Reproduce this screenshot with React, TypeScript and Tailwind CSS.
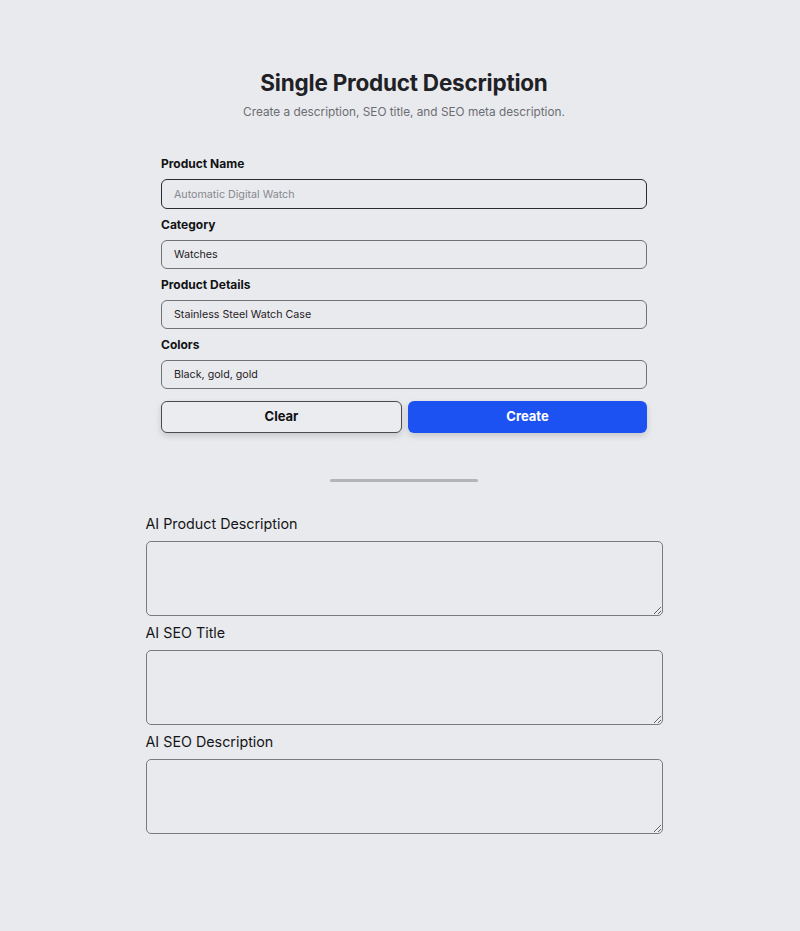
import { useState } from "react";

const fields = [
  { label: "Product Name", value: "", placeholder: "Automatic Digital Watch" },
  { label: "Category", value: "Watches", placeholder: "" },
  { label: "Product Details", value: "Stainless Steel Watch Case", placeholder: "" },
  { label: "Colors", value: "Black, gold, gold", placeholder: "" },
];

const outputs = ["AI Product Description", "AI SEO Title", "AI SEO Description"];

export default function App() {
  const [values, setValues] = useState(fields.map((f) => f.value));

  return (
    <div
      className="min-h-[931px] w-full bg-[#e9eaee] pt-[66px] pl-[8px] text-[#1f2125]"
      style={{ fontFamily: "Inter, 'Noto Sans', sans-serif" }}
    >
      <div className="flex flex-col items-center">
        <h1 className="text-[22.5px] leading-[34px] font-bold tracking-[-0.01em]">
          Single Product Description
        </h1>
        <p className="mt-[2px] text-[11.8px] leading-[20px] text-[#6b6d72]">
          Create a description, SEO title, and SEO meta description.
        </p>
      </div>

      <form
        className="mx-auto mt-[32px] flex w-[486px] flex-col"
        onSubmit={(e) => e.preventDefault()}
      >
        {fields.map((field, i) => (
          <div key={field.label} className="mb-[6px] flex flex-col">
            <label className="mb-[5px] text-[12px] leading-[20px] font-bold text-[#111214]">
              {field.label}
            </label>
            <input
              value={values[i]}
              placeholder={field.placeholder}
              onChange={(e) =>
                setValues((v) => v.map((x, j) => (j === i ? e.target.value : x)))
              }
              className={
                i === 0
                  ? "h-[30px] rounded-[6px] border-[1.5px] border-[#2a2b2e] bg-transparent px-[12px] text-[10.7px] text-[#1f2125] outline-none placeholder:text-[#86888d]"
                  : "h-[29px] rounded-[6px] border border-[#707176] bg-transparent px-[12px] text-[10.7px] text-[#1f2125] outline-none"
              }
            />
          </div>
        ))}
        <div className="mt-[6px] flex gap-[6px]">
          <button
            type="button"
            onClick={() => setValues(fields.map(() => ""))}
            className="h-[32px] flex-1 rounded-[6px] border border-[#4a4b4f] bg-[#ebecf0] text-[13px] font-bold text-[#111214] shadow-[0_3px_6px_rgba(0,0,0,0.15)]"
          >
            Clear
          </button>
          <button
            type="submit"
            className="h-[32px] flex-1 rounded-[6px] bg-[#1c52f2] text-[13px] font-bold text-white shadow-[0_3px_6px_rgba(0,0,0,0.15)]"
          >
            Create
          </button>
        </div>
      </form>

      <div className="mx-auto mt-[46px] h-[3px] w-[148px] rounded-full bg-[#b3b4b8]" />

      <div className="mx-auto mt-[31px] flex w-[517px] flex-col">
        {outputs.map((label) => (
          <div key={label} className="mb-[6px] flex flex-col">
            <label className="mb-[6px] text-[14.3px] leading-[22px] text-[#151618]">
              {label}
            </label>
            <textarea className="h-[75px] rounded-[5px] border border-[#7a7b80] bg-transparent px-2 py-1 text-[13px] outline-none" />
          </div>
        ))}
      </div>
    </div>
  );
}
